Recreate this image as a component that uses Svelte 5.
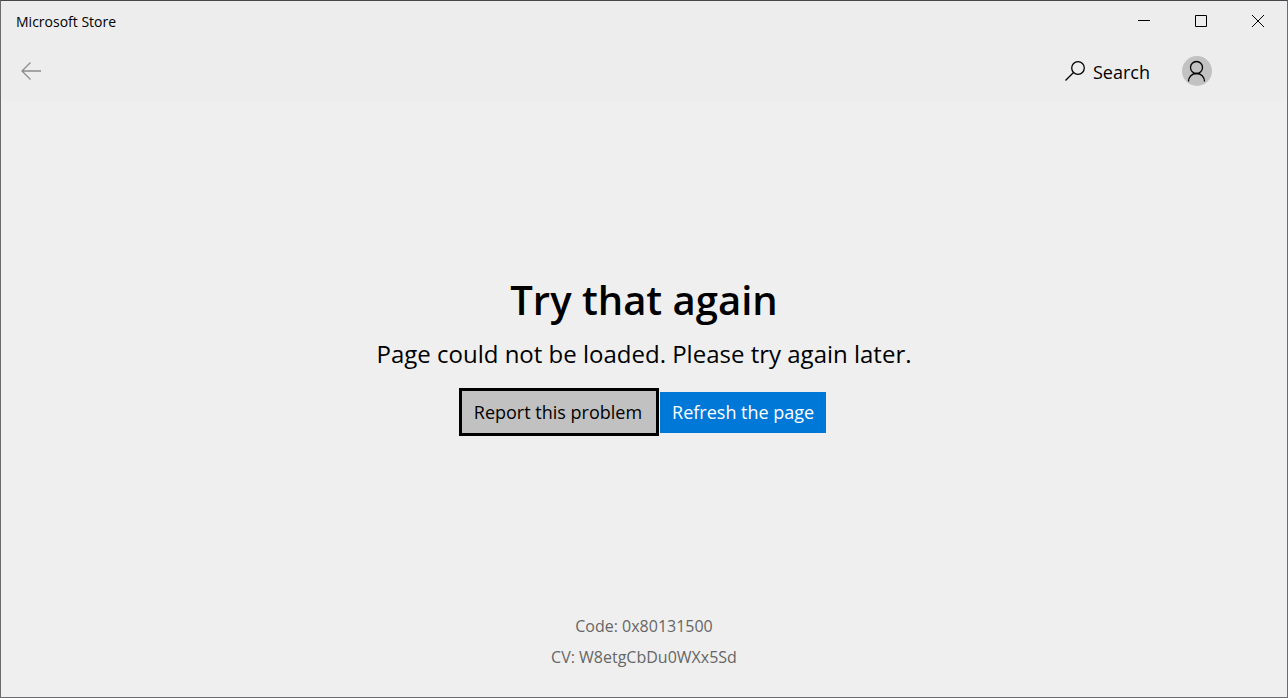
<script>
    let { code = '0x80131500', cv = 'W8etgCbDu0WXx5Sd' } = $props();
</script>

<div class="window">
    <header>
        <div class="title-bar">
            <span class="title">Microsoft Store</span>
            <div class="controls">
                <button aria-label="Minimize">
                    <svg width="12" height="12" viewBox="0 0 12 12"><path d="M0 5.5h12" /></svg>
                </button>
                <button aria-label="Maximize">
                    <svg width="12" height="12" viewBox="0 0 12 12"><path d="M.5.5h11v11H.5z" /></svg>
                </button>
                <button aria-label="Close">
                    <svg width="12" height="12" viewBox="0 0 12 12"><path d="M0 0l12 12M12 0L0 12" /></svg>
                </button>
            </div>
        </div>

        <nav>
            <button class="back" aria-label="Back">
                <svg width="20" height="18" viewBox="0 0 20 18"><path d="M20 9H1M9.500.5L1 9l8.500 8.500" /></svg>
            </button>
            <button class="search">
                <svg width="20" height="20" viewBox="0 0 20 20">
                    <circle cx="13" cy="7" r="6.300" />
                    <path d="M8.500 11.500L.5 19.500" />
                </svg>
                <span>Search</span>
            </button>
            <button class="account" aria-label="Account">
                <svg width="30" height="30" viewBox="0 0 30 30">
                    <circle cx="14.500" cy="11.500" r="6" />
                    <path d="M6.500 25.500c0-4.800 3.500-8 8-8s8 3.200 8 8" />
                </svg>
            </button>
        </nav>
    </header>

    <main>
        <h1>Try that again</h1>
        <p>Page could not be loaded. Please try again later.</p>
        <div class="actions">
            <button class="report">Report this problem</button>
            <button class="refresh">Refresh the page</button>
        </div>
    </main>

    <footer>
        <div>Code: {code}</div>
        <div>CV: {cv}</div>
    </footer>
</div>

<style>
    :global(body) {
        margin: 0;
        background: #efefef;
    }

    .window {
        box-sizing: border-box;
        min-height: 100vh;
        display: flex;
        flex-direction: column;
        border: 1px solid #6b6b6d;
        border-top-color: #48464a;
        background: #efefef;
        color: #000;
        font-family: "Segoe UI", "Open Sans", "Noto Sans", sans-serif;
    }

    header {
        background: #ededed;
    }

    button {
        display: flex;
        align-items: center;
        justify-content: center;
        padding: 0;
        border: 0;
        background: none;
        color: inherit;
        font: inherit;
    }

    svg {
        display: block;
        fill: none;
        stroke: #000;
        stroke-width: 1;
    }

    .title-bar {
        display: flex;
        justify-content: space-between;
        height: 40px;
    }

    .title {
        padding-left: 15px;
        font-size: 14px;
        line-height: 42px;
    }

    .controls {
        display: flex;
        padding-right: 1px;
    }

    .controls button {
        width: 57px;
    }

    nav {
        display: flex;
        align-items: center;
        height: 60px;
        padding: 0 75px 0 20px;
    }

    .back {
        margin-right: auto;
    }

    .back svg {
        stroke: #8c8c8c;
        stroke-width: 1.3;
    }

    .search {
        gap: 8px;
        margin-right: 32px;
        font-size: 18px;
        line-height: 24px;
    }

    .search span {
        padding-top: 2px;
    }

    .search svg,
    .account svg {
        stroke-width: 1.3;
    }

    .account {
        border-radius: 50%;
        background: #c2c2c2;
    }

    main {
        flex: 1;
        display: flex;
        flex-direction: column;
        align-items: center;
        justify-content: center;
        padding-bottom: 4px;
    }

    h1 {
        margin: 0;
        font-size: 40px;
        font-weight: 600;
        line-height: 56px;
    }

    p {
        margin: 8px 0 16px;
        font-size: 24px;
        line-height: 36px;
    }

    .actions {
        display: flex;
        align-items: center;
        gap: 1px;
        padding-right: 3px;
        font-size: 18px;
    }

    .report {
        height: 48px;
        padding: 0 14px 0 12px;
        border: 3px solid #000;
        background: #c1c1c1;
    }

    .refresh {
        height: 41px;
        padding: 0 12px;
        background: #0078d7;
        color: #fff;
    }

    footer {
        padding-bottom: 24px;
        color: #666;
        font-size: 16px;
        line-height: 31px;
        text-align: center;
    }
</style>
